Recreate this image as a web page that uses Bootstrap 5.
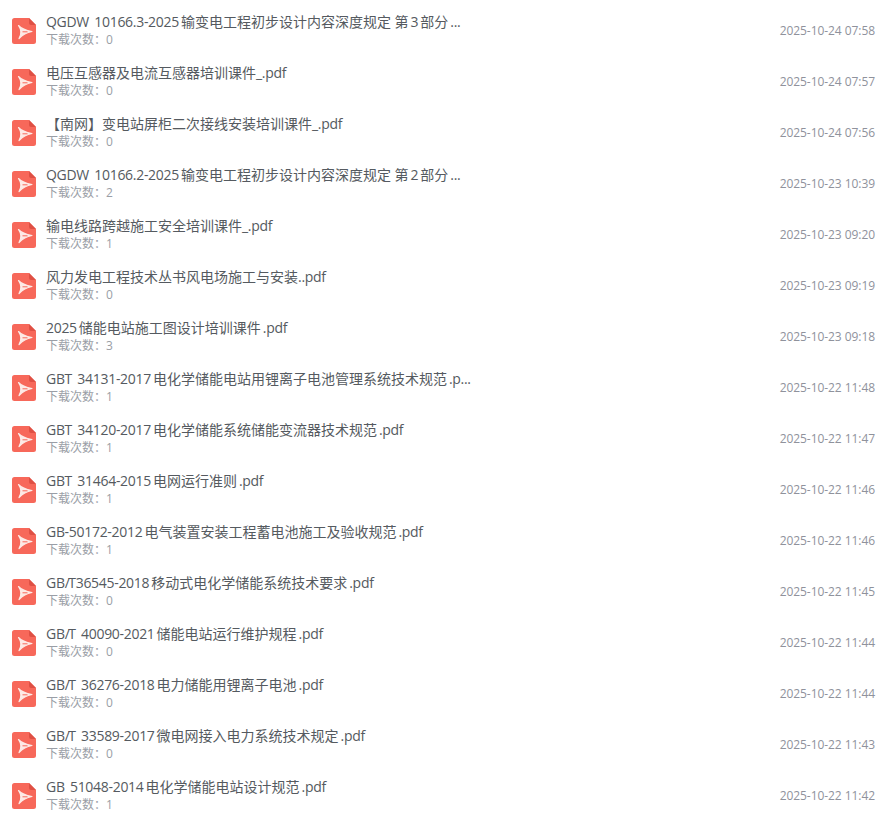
<!DOCTYPE html>
<html lang="zh-CN">
<head>
  <meta charset="UTF-8">
  <meta name="viewport" content="width=device-width,initial-scale=1">
  <title>文件列表</title>
  <link rel="stylesheet" href="https://cdn.jsdelivr.net/npm/bootstrap@5.3.2/dist/css/bootstrap.min.css">
  <style>
    body { background:#fff;font-family:"Open Sans","Noto Sans CJK SC",sans-serif;padding-top:5px; }
    .file-row { height:51px;padding:0 10px 0 12px; }
    .file-icon { width:24px;height:26px;flex:none; }
    .file-main { margin-left:10px;min-width:0; }
    .file-name { font-size:14px;line-height:18px;color:#555a60;white-space:nowrap; }
    .file-name span { letter-spacing:-.3px;word-spacing:2px;margin:0 2px; }
    .file-name span:first-child { margin-left:0; }
    .file-name i { font-style:normal;letter-spacing:-1.500px; }
    .file-count { font-size:12px;line-height:17px;color:#9a9ea6; }
    .file-date { font-size:12px;color:#8f929c;letter-spacing:-.06px; }
  </style>
</head>
<body>
  <div id="fileList"></div>

  <template id="rowTpl">
    <div class="file-row d-flex align-items-center">
      <svg class="file-icon" viewBox="0 0 24 26">
        <path d="M2.500 0H17L24 7V23.500A2.500 2.500 0 0 1 21.500 26H2.500A2.500 2.500 0 0 1 0 23.500V2.500A2.500 2.500 0 0 1 2.500 0Z" fill="#f7685a"/>
        <path d="M17 0L24 7H19A2 2 0 0 1 17 5Z" fill="#df5044"/>
        <path d="M6.500 7.500Q10.500 12 20 13.500Q12 15 7 20.500Q11 14 6.500 7.500Z" fill="#fdeae6" stroke="#fdeae6" stroke-width="1.200" stroke-linejoin="round"/>
        <path d="M10.500 13.800H15.500" stroke="#f7685a" stroke-width="1"/>
      </svg>
      <div class="file-main flex-grow-1">
        <div class="file-name"></div>
        <div class="file-count"></div>
      </div>
      <div class="file-date"></div>
    </div>
  </template>

<script>
  const files = [
    ['QGDW 10166.3-2025输变电工程初步设计内容深度规定 第3部分...', 0, '2025-10-24 07:58'],
    ['电压互感器及电流互感器培训课件_.pdf', 0, '2025-10-24 07:57'],
    ['【南网】变电站屏柜二次接线安装培训课件_.pdf', 0, '2025-10-24 07:56'],
    ['QGDW 10166.2-2025输变电工程初步设计内容深度规定 第2部分...', 2, '2025-10-23 10:39'],
    ['输电线路跨越施工安全培训课件_.pdf', 1, '2025-10-23 09:20'],
    ['风力发电工程技术丛书风电场施工与安装..pdf', 0, '2025-10-23 09:19'],
    ['2025储能电站施工图设计培训课件.pdf', 3, '2025-10-23 09:18'],
    ['GBT 34131-2017电化学储能电站用锂离子电池管理系统技术规范.p...', 1, '2025-10-22 11:48'],
    ['GBT 34120-2017电化学储能系统储能变流器技术规范.pdf', 1, '2025-10-22 11:47'],
    ['GBT 31464-2015电网运行准则.pdf', 1, '2025-10-22 11:46'],
    ['GB-50172-2012电气装置安装工程蓄电池施工及验收规范.pdf', 1, '2025-10-22 11:46'],
    ['GB/T36545-2018移动式电化学储能系统技术要求.pdf', 0, '2025-10-22 11:45'],
    ['GB/T 40090-2021储能电站运行维护规程.pdf', 0, '2025-10-22 11:44'],
    ['GB/T 36276-2018电力储能用锂离子电池.pdf', 0, '2025-10-22 11:44'],
    ['GB/T 33589-2017微电网接入电力系统技术规定.pdf', 0, '2025-10-22 11:43'],
    ['GB 51048-2014电化学储能电站设计规范.pdf', 1, '2025-10-22 11:42']
  ];

  // 英数字の部分だけ字間を詰める
  const nameHtml = name => name
    .replace(/[!-~][ -~]*/g, m => `<span>${m}</span>`)
    .replace('GB/T', 'GB<i>/</i>T');

  const list = document.getElementById('fileList');
  const tpl = document.getElementById('rowTpl');
  files.forEach(([name, count, date]) => {
    const row = tpl.content.cloneNode(true);
    row.querySelector('.file-name').innerHTML = nameHtml(name);
    row.querySelector('.file-count').textContent = `下载次数：${count}`;
    row.querySelector('.file-date').textContent = date;
    list.appendChild(row);
  });
</script>
<script src="https://cdn.jsdelivr.net/npm/bootstrap@5.3.2/dist/js/bootstrap.bundle.min.js"></script>
</body>
</html>
